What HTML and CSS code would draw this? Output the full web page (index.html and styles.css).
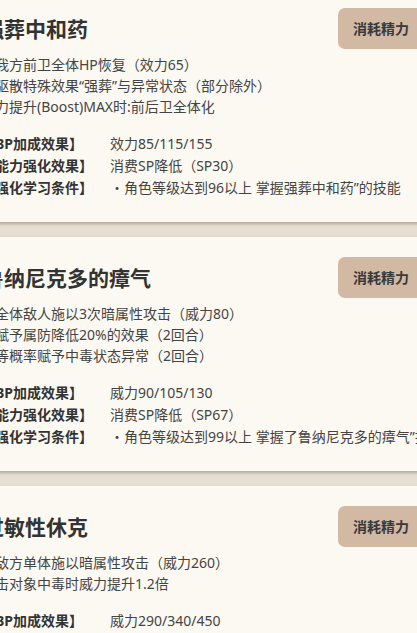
FILE: index.html
```html
<!DOCTYPE html>
<html lang="zh-CN">
<head>
    <meta charset="UTF-8">
    <meta name="viewport" content="width=device-width, initial-scale=1.0">
    <title>技能一览</title>
    <link rel="stylesheet" href="styles.css">
</head>
<body>

    <main class="skills">

        <section class="skill">
            <div class="skill-head">
                <h2>强葬中和药</h2>
                <span class="cost">消耗精力</span>
            </div>
            <div class="desc">
                <p>对我方前卫全体HP恢复（效力65）</p>
                <p>并驱散特殊效果“强葬”与异常状态（部分除外）</p>
                <p>能力提升(Boost)MAX时:前后卫全体化</p>
            </div>
            <div class="info">
                <div class="row"><span class="label">【BP加成效果】</span><span>效力85/115/155</span></div>
                <div class="row"><span class="label">【能力强化效果】</span><span>消费SP降低（SP30）</span></div>
                <div class="row"><span class="label">【强化学习条件】</span><span>・角色等级达到96以上 掌握强葬中和药”的技能</span></div>
            </div>
        </section>

        <section class="skill">
            <div class="skill-head">
                <h2>鲁纳尼克多的瘴气</h2>
                <span class="cost">消耗精力</span>
            </div>
            <div class="desc">
                <p>对全体敌人施以3次暗属性攻击（威力80）</p>
                <p>并赋予属防降低20%的效果（2回合）</p>
                <p>中等概率赋予中毒状态异常（2回合）</p>
            </div>
            <div class="info">
                <div class="row"><span class="label">【BP加成效果】</span><span>威力90/105/130</span></div>
                <div class="row"><span class="label">【能力强化效果】</span><span>消费SP降低（SP67）</span></div>
                <div class="row"><span class="label">【强化学习条件】</span><span>・角色等级达到99以上 掌握了鲁纳尼克多的瘴气”技能</span></div>
            </div>
        </section>

        <section class="skill">
            <div class="skill-head">
                <h2>过敏性休克</h2>
                <span class="cost">消耗精力</span>
            </div>
            <div class="desc">
                <p>对敌方单体施以暗属性攻击（威力260）</p>
                <p>攻击对象中毒时威力提升1.2倍</p>
            </div>
            <div class="info">
                <div class="row"><span class="label">【BP加成效果】</span><span>威力290/340/450</span></div>
                <div class="row"><span class="label">【能力强化效果】</span><span>消费SP降低（SP50）</span></div>
                <div class="row"><span class="label">【强化学习条件】</span><span>・角色等级达到98以上</span></div>
            </div>
        </section>

    </main>

</body>
</html>
```

FILE: styles.css
```css
html, body {
    overflow: hidden;
}

body {
    margin: 0;
    background-color: #e6ded2;
    font-family: "Noto Sans", "Noto Sans CJK SC", sans-serif;
    color: #444;
}

.skills {
    display: flex;
    flex-direction: column;
    gap: 15px;
    margin: -12px -7px 0 -39px;
}

.skill {
    background-color: #fcf9f2;
    padding: 20px 0 23px 20px;
    box-shadow: 0 2px 3px rgba(90, 70, 50, 0.35);
}

.skill-head {
    display: flex;
    justify-content: space-between;
    align-items: center;
}

.skill-head h2 {
    margin: 0 0 0 2px;
    font-size: 21px;
    line-height: 28px;
    color: #333;
}

.cost {
    display: inline-block;
    background-color: #d1b9a4;
    border-radius: 7px;
    padding: 0 15px;
    height: 41px;
    line-height: 41px;
    font-size: 14px;
    font-weight: bold;
    color: #3a3a3a;
}

.desc {
    margin-top: 5px;
    font-size: 14px;
    line-height: 21px;
}

.desc p {
    margin: 0;
}

.info {
    margin-top: 16px;
    font-size: 14px;
    line-height: 22px;
}

.row {
    display: grid;
    grid-template-columns: 129px auto;
    white-space: nowrap;
}

.label {
    font-weight: bold;
    color: #333;
}
```
